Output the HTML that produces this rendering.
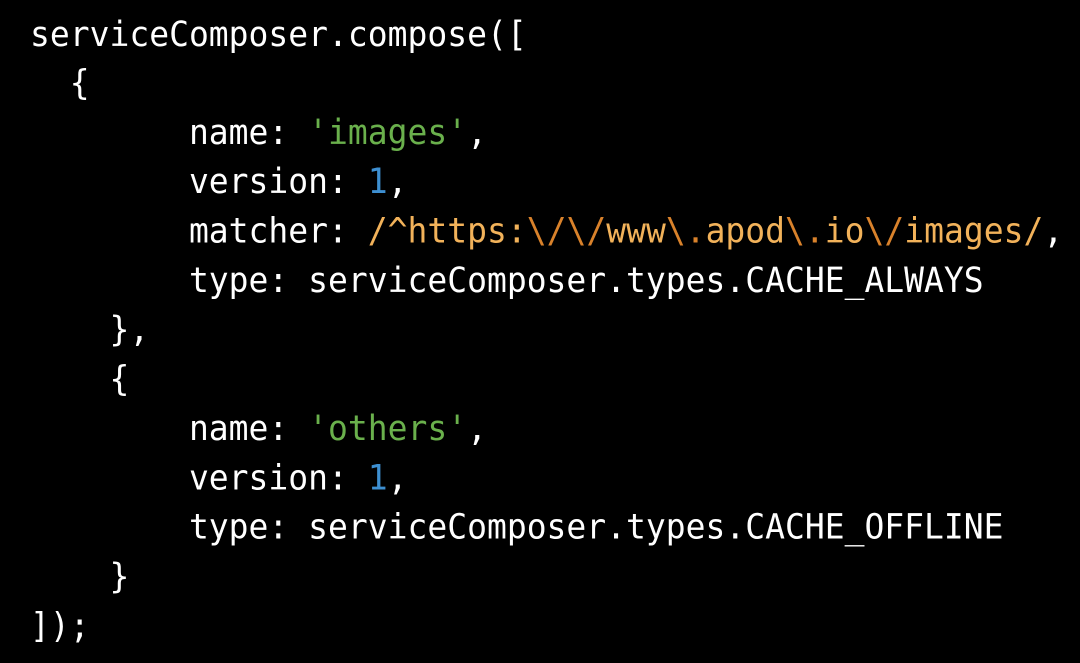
<!DOCTYPE html>
<html><head><style>
html,body{margin:0;padding:0;background:#000;width:1080px;height:663px;overflow:hidden}
pre{margin:0;padding:9.5px 0 0 30px;font-family:"DejaVu Sans Mono","Liberation Mono",monospace;font-size:33px;line-height:46.95px;color:#fff;transform:scaleY(1.05);transform-origin:0 0}
.s{color:#6ab04c}.n{color:#3d8fd1}.r{color:#f2b25a}.e{color:#d9822b}
</style></head><body><pre>serviceComposer.compose([
  {
        name: <span class="s">'images'</span>,
        version: <span class="n">1</span>,
        matcher: <span class="r">/^https:<span class="e">\/\/</span>www<span class="e">\.</span>apod<span class="e">\.</span>io<span class="e">\/</span>images/</span>,
        type: serviceComposer.types.CACHE_ALWAYS
    },
    {
        name: <span class="s">'others'</span>,
        version: <span class="n">1</span>,
        type: serviceComposer.types.CACHE_OFFLINE
    }
]);</pre></body></html>
